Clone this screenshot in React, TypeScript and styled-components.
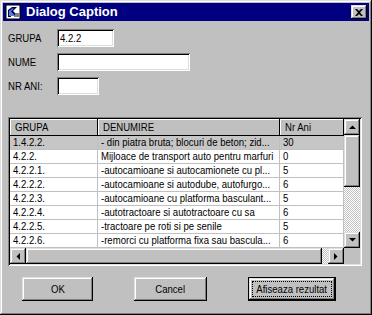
import React from "react";
import styled, { createGlobalStyle, css } from "styled-components";

const Global = createGlobalStyle`
  html, body { margin: 0; padding: 0; background: #c0c0c0; }
  body {
    font-family: "Liberation Sans", Arial, sans-serif;
    font-size: 11px;
    color: #000;
  }
  * { box-sizing: border-box; }
`;

const raised = css`
  box-shadow: inset -1px -1px #000, inset 1px 1px #dfdfdf, inset -2px -2px #808080,
    inset 2px 2px #fff;
`;

const sunken = css`
  box-shadow: inset 1px 1px #808080, inset -1px -1px #fff, inset 2px 2px #000,
    inset -2px -2px #dfdfdf;
`;

const Narrow = styled.span<{ $center?: boolean }>`
  display: inline-block;
  white-space: nowrap;
  transform: scaleX(0.87);
  transform-origin: ${(p) => (p.$center ? "center" : "left")} center;
`;

const Window = styled.div`
  width: 372px;
  height: 315px;
  padding: 3px;
  background: #c0c0c0;
  display: flex;
  flex-direction: column;
  ${raised}
`;

const TitleBar = styled.div`
  height: 18px;
  background: #000080;
  display: flex;
  align-items: center;
  padding: 0 2px 0 2px;
  gap: 5px;
`;

const TitleText = styled.span`
  color: #fff;
  font-family: "Liberation Sans", Arial, sans-serif;
  font-weight: bold;
  font-size: 13px;
  line-height: 18px;
`;

const CloseButton = styled.div`
  margin-left: auto;
  width: 16px;
  height: 14px;
  background: #c0c0c0;
  display: flex;
  align-items: center;
  justify-content: center;
  ${raised}
`;

const Content = styled.div`
  flex: 1;
  display: flex;
  flex-direction: column;
  padding: 8px 8px 0 5px;
`;

const Form = styled.div`
  display: grid;
  grid-template-columns: 49px auto;
  row-gap: 6px;
  align-items: center;
  justify-items: start;
`;

const Label = styled.span`
  font-size: 11px;
  line-height: 18px;
`;

const Field = styled.div<{ $w: number }>`
  width: ${(p) => p.$w}px;
  height: 18px;
  background: #fff;
  padding: 0 3px;
  line-height: 18px;
  font-size: 11px;
  ${sunken}
`;

const GridFrame = styled.div`
  margin-top: 22px;
  width: 354px;
  height: 149px;
  padding: 2px;
  display: flex;
  flex-direction: column;
  ${sunken}
`;

const GridTop = styled.div`
  display: flex;
  height: 129px;
`;

const Table = styled.div`
  width: 334px;
  background: #fff;
  display: flex;
  flex-direction: column;
`;

const cols = "88px 182px 64px";

const HeaderRow = styled.div`
  display: grid;
  grid-template-columns: ${cols};
  height: 17px;
  background: #c0c0c0;
`;

const HeaderCell = styled.div`
  padding: 0 5px;
  line-height: 16px;
  border-right: 1px solid #000;
  border-bottom: 1px solid #000;
  box-shadow: inset 1px 1px #fff;
  white-space: nowrap;
  overflow: hidden;
`;

const DataRow = styled.div<{ $current?: boolean }>`
  display: grid;
  grid-template-columns: ${cols};
  height: 14px;
  background: ${(p) => (p.$current ? "#c6c6c6" : "#fff")};
`;

const DataCell = styled.div`
  padding: 0 3px;
  line-height: 13px;
  border-right: 1px solid #c0c0c0;
  border-bottom: 1px solid #c0c0c0;
  white-space: nowrap;
  overflow: hidden;
`;

const VScroll = styled.div`
  width: 16px;
  display: flex;
  flex-direction: column;
`;

const HScroll = styled.div`
  width: 334px;
  height: 16px;
  display: flex;
`;

const GridBottom = styled.div`
  display: flex;
  height: 16px;
`;

const Corner = styled.div`
  width: 16px;
  background: #c0c0c0;
`;

const ArrowBtn = styled.div`
  width: 16px;
  height: 16px;
  flex: none;
  background: #c0c0c0;
  display: flex;
  align-items: center;
  justify-content: center;
  ${raised}
`;

const Thumb = styled.div<{ $len: number; $horizontal?: boolean }>`
  flex: none;
  ${(p) => (p.$horizontal ? `width: ${p.$len}px;` : `height: ${p.$len}px;`)}
  background: #c0c0c0;
  ${raised}
`;

const Track = styled.div`
  flex: 1;
  background: repeating-conic-gradient(#c0c0c0 0% 25%, #fff 0% 50%) 0 0 / 2px 2px;
`;

const Buttons = styled.div`
  margin-top: 11px;
  margin-left: 14px;
  display: grid;
  grid-template-columns: 71px 73px 88px;
  column-gap: 41px;
`;

const PushButton = styled.div<{ $default?: boolean }>`
  position: relative;
  height: 24px;
  background: #c0c0c0;
  display: flex;
  align-items: center;
  justify-content: center;
  font-size: 11px;
  ${raised}
  ${(p) =>
    p.$default &&
    css`
      box-shadow: inset 0 0 0 1px #000, inset -2px -2px #000, inset 2px 2px #dfdfdf,
        inset -3px -3px #808080, inset 3px 3px #fff;
      &::after {
        content: "";
        position: absolute;
        inset: 4px;
        border: 1px dotted #000;
      }
    `}
`;

const Arrow = ({ dir }: { dir: "up" | "down" | "left" | "right" }) => {
  const pts = {
    up: "0,4 7,4 3.5,0.5",
    down: "0,0 7,0 3.5,3.5",
    left: "4,0 4,7 0.5,3.5",
    right: "0,0 0,7 3.5,3.5",
  }[dir];
  const horiz = dir === "left" || dir === "right";
  return (
    <svg width={horiz ? 4 : 7} height={horiz ? 7 : 4} viewBox={horiz ? "0 0 4 7" : "0 0 7 4"}>
      <polygon points={pts} fill="#000" />
    </svg>
  );
};

const AppIcon = () => (
  <svg width="16" height="16" viewBox="0 0 16 16">
    <rect x="1" y="1" width="14" height="14" fill="#fff" stroke="#000" strokeWidth="1" />
    <path d="M3 13 L3 6 L7 3 L12 3 L8 7 L13 12 L10 13 L6 9 L6 13 Z" fill="#000060" />
    <path d="M4 12 L4 7 L7 4.5 L9 4.5 L6 7.5 L10.5 12 Z" fill="#5a7ec8" />
    <rect x="10" y="9" width="4" height="4" fill="#808080" />
  </svg>
);

const CloseIcon = () => (
  <svg width="8" height="7" viewBox="0 0 8 7">
    <path d="M0 0h2l2 2 2-2h2L5 3.5 8 7H6L4 5 2 7H0l3-3.5z" fill="#000" />
  </svg>
);

const rows: [string, string, string][] = [
  ["1.4.2.2.", "- din piatra bruta; blocuri de beton; zid...", "30"],
  ["4.2.2.", "Mijloace de transport auto pentru marfuri", "0"],
  ["4.2.2.1.", "-autocamioane si autocamionete cu pl...", "5"],
  ["4.2.2.2.", "-autocamioane si autodube, autofurgo...", "6"],
  ["4.2.2.3.", "-autocamioane cu platforma basculant...", "5"],
  ["4.2.2.4.", "-autotractoare si autotractoare cu sa", "6"],
  ["4.2.2.5.", "-tractoare pe roti si pe senile", "5"],
  ["4.2.2.6.", "-remorci cu platforma fixa sau bascula...", "6"],
];

export default function App() {
  return (
    <>
      <Global />
      <Window>
        <TitleBar>
          <AppIcon />
          <TitleText>Dialog Caption</TitleText>
          <CloseButton>
            <CloseIcon />
          </CloseButton>
        </TitleBar>
        <Content>
          <Form>
            <Label>
              <Narrow>GRUPA</Narrow>
            </Label>
            <Field $w={57}>
              <Narrow>4.2.2</Narrow>
            </Field>
            <Label>
              <Narrow>NUME</Narrow>
            </Label>
            <Field $w={133} />
            <Label>
              <Narrow>NR ANI:</Narrow>
            </Label>
            <Field $w={42} />
          </Form>
          <GridFrame>
            <GridTop>
              <Table>
                <HeaderRow>
                  <HeaderCell>
                    <Narrow>GRUPA</Narrow>
                  </HeaderCell>
                  <HeaderCell>
                    <Narrow>DENUMIRE</Narrow>
                  </HeaderCell>
                  <HeaderCell>
                    <Narrow>Nr Ani</Narrow>
                  </HeaderCell>
                </HeaderRow>
                {rows.map((r, i) => (
                  <DataRow key={i} $current={i === 0}>
                    {r.map((c, j) => (
                      <DataCell key={j}>
                        <Narrow>{c}</Narrow>
                      </DataCell>
                    ))}
                  </DataRow>
                ))}
              </Table>
              <VScroll>
                <ArrowBtn>
                  <Arrow dir="up" />
                </ArrowBtn>
                <Thumb $len={52} />
                <Track />
                <ArrowBtn>
                  <Arrow dir="down" />
                </ArrowBtn>
              </VScroll>
            </GridTop>
            <GridBottom>
              <HScroll>
                <ArrowBtn>
                  <Arrow dir="left" />
                </ArrowBtn>
                <Thumb $len={296} $horizontal />
                <Track />
                <ArrowBtn>
                  <Arrow dir="right" />
                </ArrowBtn>
              </HScroll>
              <Corner />
            </GridBottom>
          </GridFrame>
          <Buttons>
            <PushButton>
              <Narrow $center>OK</Narrow>
            </PushButton>
            <PushButton>
              <Narrow $center>Cancel</Narrow>
            </PushButton>
            <PushButton $default>
              <Narrow $center>Afiseaza rezultat</Narrow>
            </PushButton>
          </Buttons>
        </Content>
      </Window>
    </>
  );
}
